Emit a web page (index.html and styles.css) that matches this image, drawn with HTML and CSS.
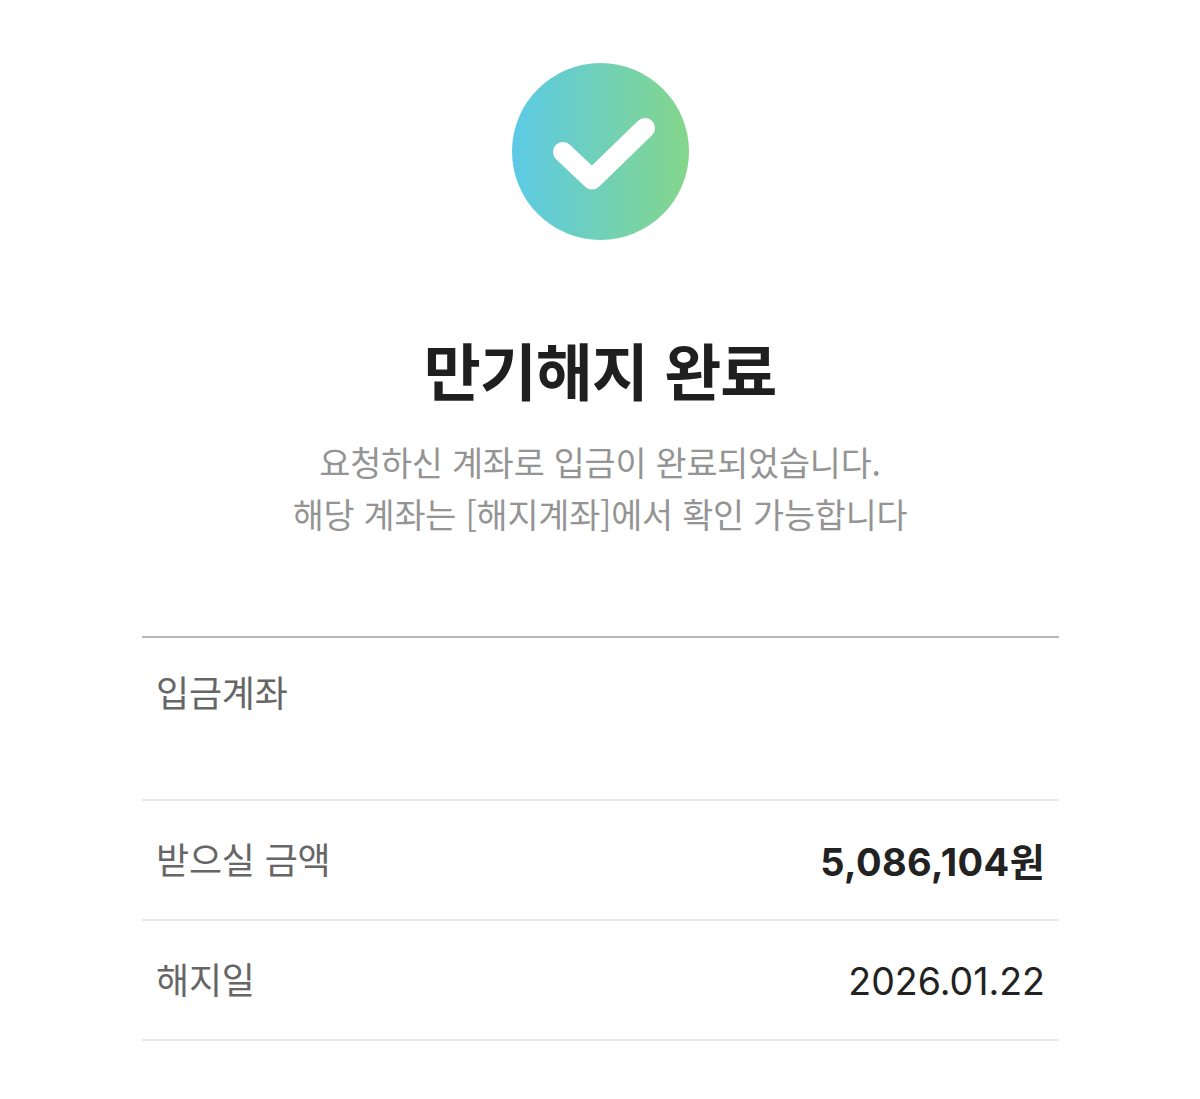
FILE: index.html
```html
<!DOCTYPE html>
<html lang="ko">
    <head>
        <meta charset="UTF-8" />
        <title>만기해지 완료</title>
        <link rel="stylesheet" href="styles.css">
    </head>
    <body>
        <!-- Check badge -->
        <div class="badge">
            <svg width="177" height="177" viewBox="0 0 177 177">
                <defs>
                    <linearGradient id="badgeFill" x1="0" y1="0" x2="1" y2="0">
                        <stop offset="0" stop-color="#5ccae6" />
                        <stop offset="1" stop-color="#84d68a" />
                    </linearGradient>
                </defs>
                <circle cx="88.5" cy="88.5" r="88.5" fill="url(#badgeFill)" />
                <path d="M51 89 L80 116.500 L133 65" fill="none" stroke="#fff" stroke-width="20" stroke-linecap="round" stroke-linejoin="round" />
            </svg>
        </div>

        <!-- Title -->
        <h1 class="title">만기해지 완료</h1>
        <p class="desc">요청하신 계좌로 입금이 완료되었습니다.<br>해당 계좌는 [해지계좌]에서 확인 가능합니다</p>

        <!-- Detail rows -->
        <div class="details">
            <div class="row row-account">
                <span class="label">입금계좌</span>
            </div>
            <div class="row">
                <span class="label">받으실 금액</span>
                <span class="value value-strong">5,086,104원</span>
            </div>
            <div class="row">
                <span class="label">해지일</span>
                <span class="value">2026.01.22</span>
            </div>
        </div>
    </body>
</html>
```

FILE: styles.css
```css
/* Page */
body {
    margin: 0;
    background-color: #fff;
    font-family: "Noto Sans CJK KR", "Noto Sans", sans-serif;
    text-align: center;
}

/* Check badge */
.badge {
    padding-top: 63px;
    height: 177px;
}

.badge svg {
    display: block;
    margin: 0 auto;
}

/* Title Styling */
.title {
    margin: 89px 0 0;
    font-size: 62px;
    font-weight: 700;
    line-height: 80px;
    letter-spacing: -1px;
    color: #1f1f1f;
}

.desc {
    margin: 27px 0 0;
    font-size: 33.75px;
    font-weight: 400;
    line-height: 52px;
    letter-spacing: -0.2px;
    color: #949494;
}

/* Detail rows */
.details {
    margin: 96px 141px 0 142px;
    border-top: 2px solid #b5b5b5;
}

.row {
    display: flex;
    justify-content: space-between;
    align-items: center;
    height: 118px;
    padding: 0 14px;
    border-bottom: 2px solid #e8e8e8;
}

.row-account {
    align-items: flex-start;
    height: 161px;
}

.label {
    margin-bottom: 4px;
    font-size: 36px;
    font-weight: 400;
    letter-spacing: -0.2px;
    color: #666;
}

.row-account .label {
    margin-top: 27px;
}

.value {
    margin-top: 2px;
    font-family: "Inter", "Noto Sans CJK KR", sans-serif;
    font-size: 37.5px;
    color: #222;
}

.value-strong {
    margin-top: 0;
    margin-bottom: 2px;
    font-size: 38px;
    font-weight: 700;
    letter-spacing: 0.4px;
}
```
